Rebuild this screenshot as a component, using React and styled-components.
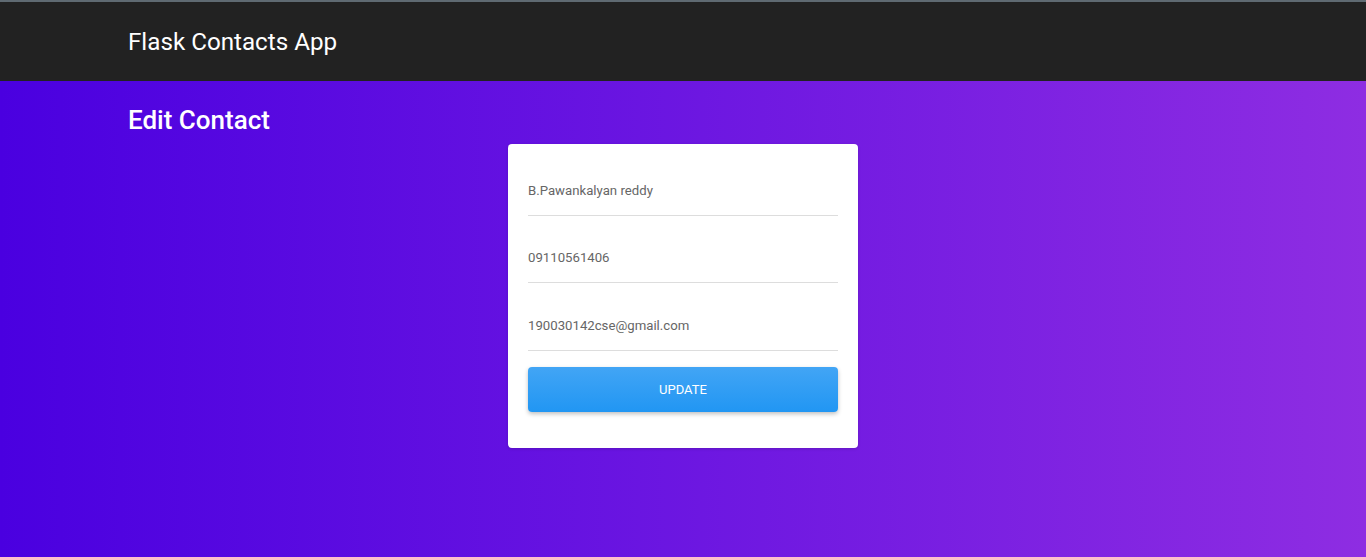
import React from "react";
import styled, { createGlobalStyle } from "styled-components";

const GlobalStyle = createGlobalStyle`
  html, body {
    margin: 0;
    padding: 0;
    height: 100%;
  }
  body {
    font-family: Roboto, "Liberation Sans", Arial, sans-serif;
    background: linear-gradient(to right, #4a00e0, #8e2de2);
    min-height: 557px;
    -webkit-font-smoothing: antialiased;
  }
  * { box-sizing: border-box; }
`;

const Page = styled.div`
  min-height: 557px;
  background: linear-gradient(to right, #4a00e0, #8e2de2);
`;

const Navbar = styled.header`
  height: 81px;
  background: #222222;
  border-top: 2px solid #5f6a72;
  display: flex;
  align-items: center;
`;

const Container = styled.div`
  width: 1140px;
  margin: 0 auto;
  padding: 0 15px;
`;

const Brand = styled.a`
  display: block;
  color: #ffffff;
  font-size: 24.2px;
  font-weight: 400;
  line-height: 28px;
  padding-top: 1px;
  text-decoration: none;
`;

const Title = styled.h2`
  margin: 24px 0 0;
  color: #ffffff;
  font-size: 26px;
  font-weight: 500;
  line-height: 30px;
`;

const Card = styled.form`
  width: 350px;
  margin: 9px auto 0;
  background: #ffffff;
  border-radius: 4px;
  padding: 20px 20px 36px;
  box-shadow: 0 1px 3px rgba(0, 0, 0, 0.15);
  display: flex;
  flex-direction: column;
`;

const Field = styled.input`
  display: block;
  width: 100%;
  height: 52px;
  margin: 0 0 15px;
  padding: 2px 0 0;
  border: none;
  border-bottom: 1px solid #dddddd;
  background: transparent;
  font-family: Roboto, "Liberation Sans", Arial, sans-serif;
  font-size: 13.2px;
  color: #666666;
  outline: none;

  & + & + & {
    margin-top: 1px;
  }
`;

const Button = styled.button`
  height: 45px;
  margin-top: 1px;
  border: none;
  border-radius: 4px;
  background: linear-gradient(to bottom, #42a5f5, #2196f3);
  color: #ffffff;
  font-family: Roboto, "Liberation Sans", Arial, sans-serif;
  font-size: 13px;
  font-weight: 400;
  text-transform: uppercase;
  box-shadow: 0 2px 4px rgba(0, 0, 0, 0.25);
  cursor: pointer;
`;

export default function App() {
  return (
    <>
      <GlobalStyle />
      <Page>
        <Navbar>
          <Container>
            <Brand href="#">Flask Contacts App</Brand>
          </Container>
        </Navbar>
        <Container>
          <Title>Edit Contact</Title>
        </Container>
        <Card onSubmit={(e) => e.preventDefault()}>
          <Field type="text" defaultValue="B.Pawankalyan reddy" />
          <Field type="text" defaultValue="09110561406" />
          <Field type="email" defaultValue="190030142cse@gmail.com" />
          <Button type="submit">Update</Button>
        </Card>
      </Page>
    </>
  );
}
